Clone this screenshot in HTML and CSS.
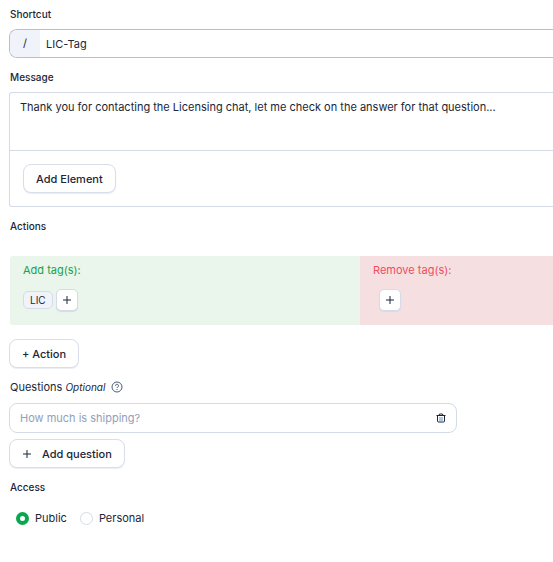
FILE: index.html
```html
<!DOCTYPE html>
<html lang="en">
<head>
<meta charset="utf-8">
<meta name="viewport" content="width=device-width, initial-scale=1">
<title>Edit canned response</title>
<link rel="stylesheet" href="styles.css">
</head>
<body>
<form class="form">
  <section class="field">
    <label class="label" for="shortcut">Shortcut</label>
    <div class="shortcut">
      <span class="prefix">/</span>
      <input class="shortcut-input" id="shortcut" type="text" value="LIC-Tag">
    </div>
  </section>

  <section class="field">
    <label class="label" for="message">Message</label>
    <div class="editor">
      <textarea class="message" id="message">Thank you for contacting the Licensing chat, let me check on the answer for that question...</textarea>
      <div class="toolbar">
        <button class="button" type="button">Add Element</button>
      </div>
    </div>
  </section>

  <section class="field actions">
    <h2 class="label">Actions</h2>
    <div class="panels">
      <div class="panel panel-add">
        <h3 class="panel-title">Add tag(s):</h3>
        <div class="tags">
          <span class="tag">LIC</span>
          <button class="plus-button" type="button" aria-label="Add tag">
            <svg class="plus" viewBox="0 0 10 10" aria-hidden="true"><path d="M5 1v8M1 5h8"/></svg>
          </button>
        </div>
      </div>
      <div class="panel panel-remove">
        <h3 class="panel-title">Remove tag(s):</h3>
        <div class="tags tags-empty">
          <button class="plus-button" type="button" aria-label="Add tag to remove">
            <svg class="plus" viewBox="0 0 10 10" aria-hidden="true"><path d="M5 1v8M1 5h8"/></svg>
          </button>
        </div>
      </div>
    </div>
    <button class="button" type="button">+ Action</button>
  </section>

  <section class="field questions">
    <div class="label-row">
      <label class="label label-light" for="question">Questions <em class="optional">Optional</em></label>
      <svg class="help" viewBox="0 0 12 12" aria-hidden="true">
        <circle cx="6" cy="6" r="5"/>
        <path class="help-mark" d="M4.5 4.800a1.500 1.500 0 1 1 2.200 1.300c-.5.200-.7.400-.7.900M6 8v1"/>
      </svg>
    </div>
    <div class="question">
      <input class="question-input" id="question" type="text" placeholder="How much is shipping?">
      <button class="delete" type="button" aria-label="Delete question">
        <svg class="trash" viewBox="0 0 10 10" aria-hidden="true">
          <path class="trash-bars" d="M4 4v4M6 4v4"/>
          <path d="M.5 2.500h9M3 2.500l.5-1.500h3l.5 1.500M1.500 2.500v5.500q0 1 1 1h5q1 0 1-1v-5.500"/>
        </svg>
      </button>
    </div>
    <button class="button button-icon" type="button">
      <svg class="plus" viewBox="0 0 10 10" aria-hidden="true"><path d="M5 1v8M1 5h8"/></svg>
      Add question
    </button>
  </section>

  <fieldset class="access">
    <legend class="label">Access</legend>
    <div class="radios">
      <label class="choice"><input class="radio" type="radio" name="access" checked>Public</label>
      <label class="choice"><input class="radio" type="radio" name="access">Personal</label>
    </div>
  </fieldset>
</form>
</body>
</html>
```
FILE: styles.css
```css
* {
  box-sizing: border-box;
}

body {
  margin: 0;
  background: #fff;
  color: #1b2638;
  font: 11px/20px Inter, sans-serif;
}

input,
textarea,
button {
  margin: 0;
  color: inherit;
  font: inherit;
}

.form {
  display: flex;
  flex-direction: column;
  gap: 9px;
  padding: 4px 0 16px 9px;
}

.field {
  display: flex;
  flex-direction: column;
  align-items: flex-start;
}

.label {
  display: block;
  margin: 0 0 5px;
  padding: 0 1px;
  font-size: 10px;
  font-weight: 500;
}

.shortcut {
  display: flex;
  align-self: stretch;
  height: 29px;
  overflow: hidden;
  border: 1px solid #b6bfcc;
  border-right: 0;
  border-radius: 8px 0 0 8px;
}

.prefix {
  flex: none;
  width: 30px;
  background: #f0f3f9;
  line-height: 27px;
  text-align: center;
}

.shortcut-input {
  flex: 1;
  min-width: 0;
  padding: 0 6px;
  border: 0;
  outline: 0;
  background: none;
}

.editor {
  align-self: stretch;
  border: 1px solid #d5dbe6;
  border-right: 0;
  border-radius: 3px 0 0 3px;
}

.message {
  display: block;
  width: 100%;
  height: 57px;
  padding: 4px 10px;
  border: 0;
  outline: 0;
  background: none;
  resize: none;
}

.toolbar {
  padding: 13px;
  border-top: 1px solid #d5dbe6;
}

.button {
  height: 29px;
  padding: 0 12px;
  border: 1px solid #d8deea;
  border-radius: 8px;
  background: #fff;
  box-shadow: 0 1px 1px #e9edf3;
  font-weight: 500;
  line-height: 20px;
}

.panels {
  display: grid;
  grid-template-columns: 350px 1fr;
  align-self: stretch;
  margin: 15px 0 14px 1px;
  overflow: hidden;
  border-radius: 3px 0 0 3px;
}

.panel {
  padding: 4px 13px 14px;
}

.panel-add {
  background: #eaf5ec;
}

.panel-remove {
  background: #f5dfe1;
}

.panel-title {
  margin: 0 0 9px;
  font-size: 11px;
  font-weight: 400;
}

.panel-add .panel-title {
  color: #16a34a;
}

.panel-remove .panel-title {
  color: #ef4d60;
}

.tags {
  display: flex;
  align-items: center;
  gap: 3px;
}

.tags-empty {
  padding-left: 6px;
}

.tag {
  padding: 0 6px;
  border: 1px solid #d5dbe8;
  border-radius: 5px;
  background: #f0f3f9;
  font-size: 10px;
  line-height: 16px;
}

.plus-button {
  display: grid;
  place-items: center;
  width: 22px;
  height: 22px;
  padding: 0;
  border: 1px solid #d5dbe8;
  border-radius: 5px;
  background: #fff;
  box-shadow: 0 1px 1px #d5dbe3;
}

.plus {
  width: 10px;
  height: 10px;
  fill: none;
  stroke: #1b2638;
}

.label-row {
  display: flex;
  gap: 5px;
}

.label-light {
  margin-bottom: 6px;
  font-size: 11px;
  font-weight: 400;
}

.optional {
  font-size: 10px;
}

.help {
  width: 12px;
  height: 20px;
  fill: none;
  stroke: #4b5b75;
}

.question {
  display: flex;
  align-items: center;
  width: 448px;
  max-width: 100%;
  height: 30px;
  margin-bottom: 6px;
  padding: 0 10px;
  border: 1px solid #d5dbe6;
  border-radius: 8px;
}

.question-input {
  flex: 1;
  min-width: 0;
  padding: 0;
  border: 0;
  outline: 0;
  background: none;
}

.question-input::placeholder {
  color: #94a0b8;
  opacity: 1;
}

.delete {
  display: flex;
  padding: 0;
  border: 0;
  background: none;
}

.trash {
  width: 10px;
  height: 10px;
  fill: none;
  stroke: #1b2638;
}

.trash-bars {
  stroke: #5f91bd;
}

.button-icon {
  display: flex;
  align-items: center;
  gap: 10px;
}

.access {
  min-width: 0;
  margin: 0;
  padding: 0;
  border: 0;
}

.access .label {
  margin-bottom: 11px;
}

.radios {
  display: flex;
  gap: 13px;
  padding-left: 7px;
}

.choice {
  display: flex;
  align-items: center;
  gap: 6px;
}

.radio {
  width: 13px;
  height: 13px;
  border: 1px solid #d5dbe8;
  border-radius: 50%;
  background: #fff;
  appearance: none;
}

.radio:checked {
  border: 4px solid #0aa64f;
}
```
